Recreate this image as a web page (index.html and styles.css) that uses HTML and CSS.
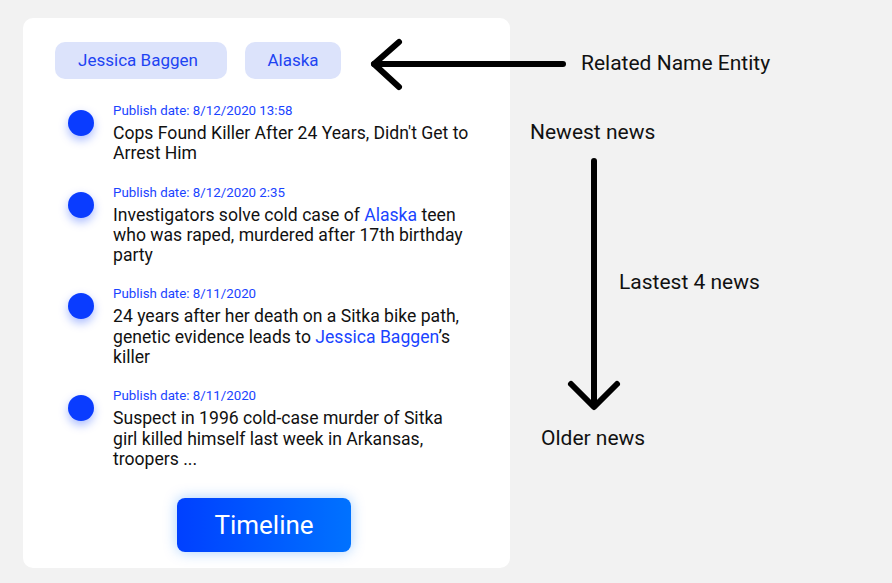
FILE: index.html
```html
<!DOCTYPE html>
<html lang="en">
<head>
<meta charset="utf-8">
<title>Timeline</title>
<link rel="stylesheet" href="styles.css">
</head>
<body>
<div class="page">
  <section class="card">
    <div class="chips">
      <span class="chip chip-wide">Jessica Baggen</span>
      <span class="chip chip-narrow">Alaska</span>
    </div>
    <ul class="news">
      <li class="item">
        <span class="dot"></span>
        <div class="body">
          <div class="date">Publish date: 8/12/2020 13:58</div>
          <div class="title">Cops Found Killer After 24 Years, Didn't Get to Arrest Him</div>
        </div>
      </li>
      <li class="item">
        <span class="dot"></span>
        <div class="body">
          <div class="date">Publish date: 8/12/2020 2:35</div>
          <div class="title">Investigators solve cold case of <span class="ent">Alaska</span> teen who was raped, murdered after 17th birthday party</div>
        </div>
      </li>
      <li class="item">
        <span class="dot"></span>
        <div class="body">
          <div class="date">Publish date: 8/11/2020</div>
          <div class="title">24 years after her death on a Sitka bike path, genetic evidence leads to <span class="ent">Jessica Baggen</span>’s killer</div>
        </div>
      </li>
      <li class="item">
        <span class="dot"></span>
        <div class="body">
          <div class="date">Publish date: 8/11/2020</div>
          <div class="title">Suspect in 1996 cold-case murder of Sitka girl killed himself last week in Arkansas, troopers ...</div>
        </div>
      </li>
    </ul>
    <button class="btn">Timeline</button>
  </section>

  <div class="notes">
    <svg class="arrows" width="892" height="583" viewBox="0 0 892 583" aria-hidden="true">
      <g fill="none" stroke="#000" stroke-width="6" stroke-linecap="round" stroke-linejoin="round">
        <path d="M563 64 H374"/>
        <path d="M399 42 L374 64 L399 87"/>
        <path d="M594 161 V405"/>
        <path d="M571 384 L594 407 L617 384"/>
      </g>
    </svg>
    <span class="note note-related">Related Name Entity</span>
    <span class="note note-newest">Newest news</span>
    <span class="note note-latest">Lastest 4 news</span>
    <span class="note note-older">Older news</span>
  </div>
</div>
</body>
</html>
```

FILE: styles.css
```css
* { box-sizing: border-box; }

html, body {
  margin: 0;
  padding: 0;
  background: #f2f2f2;
  font-family: Roboto, "Liberation Sans", Arial, sans-serif;
  color: #111;
}

.page {
  position: relative;
  width: 892px;
  height: 583px;
  overflow: hidden;
  display: flex;
  align-items: flex-start;
}

.card {
  margin: 18px 0 0 23px;
  width: 487px;
  height: 550px;
  background: #fff;
  border-radius: 10px;
  padding: 24px 37px 0 32px;
  display: flex;
  flex-direction: column;
}

.chips {
  display: flex;
  gap: 18px;
}

.chip {
  height: 37px;
  border-radius: 10px;
  background: #dce3fb;
  color: #1e44f2;
  font-size: 17px;
  display: flex;
  align-items: center;
  justify-content: center;
  padding-bottom: 2px;
}

.chip-wide { width: 172px; padding-right: 6px; }
.chip-narrow { width: 96px; }

.news {
  list-style: none;
  margin: 24px 0 0;
  padding: 0 0 0 13px;
  display: flex;
  flex-direction: column;
  gap: 21px;
}

.item {
  display: flex;
  align-items: flex-start;
  gap: 19px;
}

.dot {
  flex: none;
  width: 26px;
  height: 26px;
  margin-top: 7px;
  border-radius: 50%;
  background: #0a3cff;
  box-shadow: 0 4px 10px rgba(10, 60, 255, 0.35);
}

.body {
  width: 357px;
}

.date {
  font-size: 13.3px;
  line-height: 16px;
  color: #1a44ff;
}

.title {
  margin-top: 4px;
  font-size: 17.6px;
  line-height: 20.3px;
  color: #111;
}

.ent { color: #1a44ff; }

.btn {
  align-self: center;
  margin: 29px 0 0 0;
  width: 174px;
  height: 54px;
  border: none;
  border-radius: 8px;
  background: linear-gradient(90deg, #0040ff 0%, #0072ff 100%);
  box-shadow: 0 0 14px rgba(0, 120, 255, 0.35);
  color: #fff;
  font-family: Roboto, "Liberation Sans", Arial, sans-serif;
  font-size: 26px;
  padding: 0;
}

.notes {
  position: absolute;
  inset: 0;
  pointer-events: none;
}

.arrows {
  position: absolute;
  left: 0;
  top: 0;
}

.note {
  position: absolute;
  font-size: 21px;
  line-height: 20px;
  color: #111;
  white-space: nowrap;
}

.note-related { left: 581px; top: 53px; }
.note-newest { left: 530px; top: 122px; }
.note-latest { left: 619px; top: 272px; }
.note-older { left: 541px; top: 428px; }
```
